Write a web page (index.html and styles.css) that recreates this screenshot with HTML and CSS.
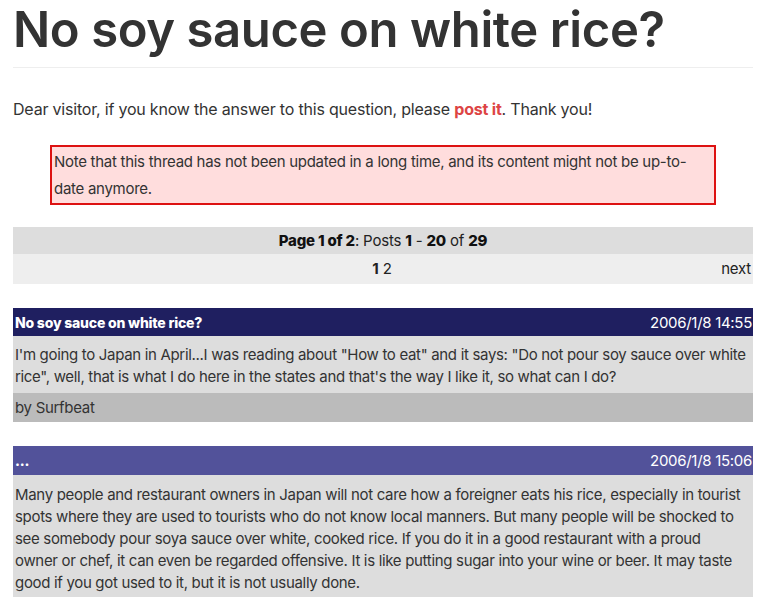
FILE: index.html
```html
<!DOCTYPE html>
<html lang="en">

<head>
    <meta charset="UTF-8">
    <meta name="viewport" content="width=device-width, initial-scale=1.0">
    <title>No soy sauce on white rice?</title>
    <link rel="stylesheet" href="styles.css">
</head>

<body>
    <div class="page">
        <h1 class="title">No soy sauce on white rice?</h1>

        <p class="intro">Dear visitor, if you know the answer to this question, please <a href="#" class="post-link">post it</a>. Thank you!</p>

        <div class="note">Note that this thread has not been updated in a long time, and its content might not be up-to-date anymore.</div>

        <!-- Paginação -->
        <div class="pager">
            <div class="pager-info"><b>Page 1 of 2</b>: Posts <b>1</b> - <b>20</b> of <b>29</b></div>
            <div class="pager-nav">
                <span></span>
                <span class="pages"><b>1</b> <a href="#">2</a></span>
                <a href="#" class="next">next</a>
            </div>
        </div>

        <!-- Posts -->
        <div class="post first">
            <div class="post-head">
                <span class="post-title">No soy sauce on white rice?</span>
                <span class="post-date">2006/1/8 14:55</span>
            </div>
            <div class="post-body">I'm going to Japan in April...I was reading about "How to eat" and it says: "Do not pour soy sauce over white rice", well, that is what I do here in the states and that's the way I like it, so what can I do?</div>
            <div class="post-foot">by Surfbeat</div>
        </div>

        <div class="post reply">
            <div class="post-head">
                <span class="post-title">...</span>
                <span class="post-date">2006/1/8 15:06</span>
            </div>
            <div class="post-body">Many people and restaurant owners in Japan will not care how a foreigner eats his rice, especially in tourist spots where they are used to tourists who do not know local manners. But many people will be shocked to see somebody pour soya sauce over white, cooked rice. If you do it in a good restaurant with a proud owner or chef, it can even be regarded offensive. It is like putting sugar into your wine or beer. It may taste good if you got used to it, but it is not usually done.</div>
        </div>
    </div>
</body>

</html>
```

FILE: styles.css
```css
body {
    margin: 0;
    font-family: Inter, "Liberation Sans", sans-serif;
    color: #333;
    background-color: white;
}

.page {
    margin: 0 8px 0 13px;
}

.title {
    font-size: 49px;
    font-weight: 600;
    letter-spacing: -0.4px;
    line-height: 60px;
    margin: 0;
    padding-bottom: 7px;
    border-bottom: 1px solid #eee;
}

.intro {
    font-size: 16px;
    letter-spacing: -0.2px;
    margin: 31px 0 26px 0;
}

.post-link {
    color: #d44;
    font-weight: bold;
    text-decoration: none;
}

.note { /* aviso de thread antiga */
    width: 90%;
    margin: 0 auto;
    box-sizing: border-box;
    border: 2px solid #d11;
    background-color: #fdd;
    padding: 1px 2px;
    font-size: 15px;
    letter-spacing: -0.28px;
    line-height: 27px;
}

.pager {
    margin-top: 22px;
    font-size: 15px;
    letter-spacing: -0.2px;
    color: #222;
}

.pager-info {
    background-color: #ddd;
    text-align: center;
    line-height: 27px;
}

.pager-info b {
    color: #111;
    font-weight: 800;
}

.pager-nav {
    background-color: #eee;
    line-height: 30px;
    display: grid;
    grid-template-columns: 1fr auto 1fr;
    padding-right: 2px;
}

.pager-nav a {
    color: #222;
    text-decoration: none;
}

.next {
    justify-self: end;
}

.post {
    margin-top: 24px;
}

.post-head {
    display: flex;
    justify-content: space-between;
    align-items: center;
    height: 28px;
    padding: 0 1px 0 2px;
    color: white;
    background-color: #52529a;
}

.first .post-head {
    background-color: #1f1f60;
}

.reply .post-head {
    height: 29px;
}

.post-title {
    font-size: 14px;
    font-weight: 800;
    letter-spacing: -0.2px;
}

.post-date {
    font-size: 15px;
    letter-spacing: -0.3px;
}

.post-body {
    background-color: #ddd;
    font-size: 15px;
    letter-spacing: -0.32px;
    line-height: 22px;
    padding: 8px 7px 5px 2px;
}

.reply .post-body {
    padding-top: 9px;
    padding-bottom: 12px;
}

.post-foot {
    background-color: #bbb;
    font-size: 15px;
    letter-spacing: -0.3px;
    line-height: 29px;
    padding: 0 2px;
}
```
